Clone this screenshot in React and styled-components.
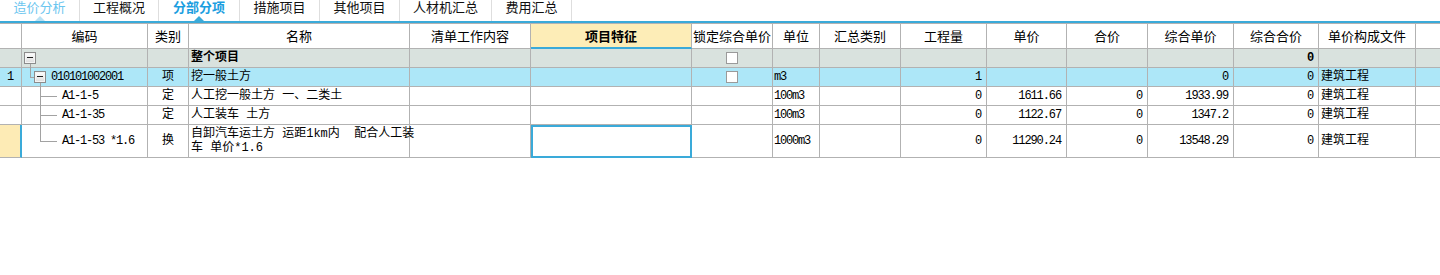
import styled, { createGlobalStyle, css } from 'styled-components';

const GlobalStyle = createGlobalStyle`
  html, body {
    margin: 0;
    padding: 0;
    background: #ffffff;
  }
  body {
    font-family: "Noto Sans CJK SC", sans-serif;
    color: #000;
  }
`;

const BLUE = '#3aaad9';
const GRID = '#b2b2b2';
const COLS = '22px 126px 41px 221px 121px 161px 81px 47px 81px 86px 80px 81px 86px 85px 97px 1fr';

const tabs = [
  { label: '造价分析', width: 80, state: 'visited' },
  { label: '工程概况', width: 79 },
  { label: '分部分项', width: 81, state: 'active' },
  { label: '措施项目', width: 80 },
  { label: '其他项目', width: 80 },
  { label: '人材机汇总', width: 92 },
  { label: '费用汇总', width: 80 }
];

const headers = [
  '', '编码', '类别', '名称', '清单工作内容', '项目特征', '锁定综合单价', '单位',
  '汇总类别', '工程量', '单价', '合价', '综合单价', '综合合价', '单价构成文件', ''
];

const rows = [
  { kind: 'root', name: '整个项目', check: true, csum: '0', tone: 'gray' },
  {
    kind: 'item', num: '1', code: '010101002001', cat: '项', name: '挖一般土方', check: true,
    unit: 'm3', qty: '1', cprice: '0', csum: '0', file: '建筑工程', tone: 'blue'
  },
  {
    kind: 'sub', code: 'A1-1-5', cat: '定', name: '人工挖一般土方 一、二类土',
    unit: '100m3', qty: '0', price: '1611.66', sum: '0', cprice: '1933.99', csum: '0', file: '建筑工程'
  },
  {
    kind: 'sub', code: 'A1-1-35', cat: '定', name: '人工装车 土方',
    unit: '100m3', qty: '0', price: '1122.67', sum: '0', cprice: '1347.2', csum: '0', file: '建筑工程'
  },
  {
    kind: 'sub', last: true, tall: true, current: true, code: 'A1-1-53 *1.6', cat: '换',
    name: '自卸汽车运土方 运距1km内  配合人工装\n车 单价*1.6',
    unit: '1000m3', qty: '0', price: '11290.24', sum: '0', cprice: '13548.29', csum: '0', file: '建筑工程'
  }
];

const App = () => {
  return (
    <>
      <GlobalStyle />
      <Page>
        <TabBar>
          {tabs.map((t) => (
            <Tab key={t.label} $width={t.width} $state={t.state}>
              {t.label}
              {t.state && <TabArrow $state={t.state} />}
            </Tab>
          ))}
        </TabBar>

        <Grid>
          <HeaderRow>
            {headers.map((h, i) => (
              <HeaderCell key={i} $feature={h === '项目特征'} $last={i === headers.length - 1}>
                {h}
              </HeaderCell>
            ))}
          </HeaderRow>

          {rows.map((r, i) => (
            <Row key={i} $tone={r.tone} $tall={r.tall}>
              <NumCell $current={r.current}>{r.num}</NumCell>
              <CodeCell>
                {r.kind === 'root' && (
                  <>
                    <ExpandBox $left={2} />
                    <VLine $left={8} $top="calc(50% + 6px)" $bottom="-1px" />
                  </>
                )}
                {r.kind === 'item' && (
                  <>
                    <VLine $left={8} $top="0" $bottom="50%" />
                    <HLine $left={8} $width={4} />
                    <ExpandBox $left={12} />
                    <VLine $left={18} $top="calc(50% + 6px)" $bottom="-1px" />
                  </>
                )}
                {r.kind === 'sub' && (
                  <>
                    <VLine $left={18} $top="-1px" $bottom={r.last ? '50%' : '-1px'} />
                    <HLine $left={18} $width={17} />
                  </>
                )}
                <CodeText $indent={r.kind === 'item' ? 29 : r.kind === 'sub' ? 40 : 0}>{r.code}</CodeText>
              </CodeCell>
              <CenterCell>{r.cat}</CenterCell>
              <TextCell $bold={r.kind === 'root'}>{r.name}</TextCell>
              <Cell />
              <Cell $current={r.current} />
              <CenterCell>{r.check && <CheckBox />}</CenterCell>
              <MonoCell>{r.unit}</MonoCell>
              <Cell />
              <NumberCell>{r.qty}</NumberCell>
              <NumberCell>{r.price}</NumberCell>
              <NumberCell>{r.sum}</NumberCell>
              <NumberCell>{r.cprice}</NumberCell>
              <NumberCell $bold={r.kind === 'root'}>{r.csum}</NumberCell>
              <TextCell>{r.file}</TextCell>
              <FillCell />
            </Row>
          ))}
        </Grid>
      </Page>
    </>
  );
};

const Page = styled.div`
  width: 1440px;
  height: 275px;
  background: #fff;
  overflow: hidden;
`;

const TabBar = styled.div`
  display: flex;
  height: 21px;
  border-bottom: 2px solid ${BLUE};
`;

const Tab = styled.div`
  position: relative;
  box-sizing: border-box;
  width: ${(p) => p.$width}px;
  border-right: 1px solid #dedede;
  display: flex;
  justify-content: center;
  align-items: flex-start;
  font-size: 13px;
  line-height: 14px;
  color: #111;

  ${(p) =>
    p.$state === 'visited' &&
    css`
      color: #6cc6ef;
    `}

  ${(p) =>
    p.$state === 'active' &&
    css`
      color: #1b9ee0;
      font-weight: 700;
    `}
`;

const TabArrow = styled.span`
  position: absolute;
  bottom: 0;
  left: 50%;
  margin-left: -5px;
  width: 0;
  height: 0;
  border-left: 5px solid transparent;
  border-right: 5px solid transparent;
  border-bottom: 5px solid ${(p) => (p.$state === 'active' ? BLUE : '#b9e1f3')};
`;

const Grid = styled.div`
  display: flex;
  flex-direction: column;
`;

const HeaderRow = styled.div`
  display: grid;
  grid-template-columns: ${COLS};
  border-top: 1px solid ${GRID};
  height: 25px;
`;

const HeaderCell = styled.div`
  box-sizing: border-box;
  display: flex;
  align-items: center;
  justify-content: center;
  font-size: 13px;
  line-height: 14px;
  white-space: nowrap;
  border-right: ${(p) => (p.$last ? 'none' : `1px solid ${GRID}`)};
  border-bottom: 1px solid ${GRID};
  background: #fff;

  ${(p) =>
    p.$feature &&
    css`
      background: #fdedb7;
      font-weight: 700;
      border-bottom: 2px solid ${BLUE};
    `}
`;

const rowTones = {
  gray: '#d9e2de',
  blue: '#ade7f8'
};

const Row = styled.div`
  display: grid;
  grid-template-columns: ${COLS};
  height: ${(p) => (p.$tall ? 33 : 19)}px;
  background: ${(p) => rowTones[p.$tone] || '#fff'};
`;

const Cell = styled.div`
  position: relative;
  box-sizing: border-box;
  display: flex;
  align-items: center;
  min-width: 0;
  border-right: 1px solid ${GRID};
  border-bottom: 1px solid ${GRID};
  font-family: "Liberation Mono", "Noto Sans CJK SC", monospace;
  font-size: 12px;
  line-height: 14px;
  white-space: nowrap;

  ${(p) =>
    p.$current &&
    css`
      outline: 2px solid ${BLUE};
      outline-offset: -2px;
      background: #fff;
      z-index: 1;
    `}
`;

const NumCell = styled(Cell)`
  justify-content: center;

  ${(p) =>
    p.$current &&
    css`
      outline: none;
      background: #fdebb5;
      border-right: 2px solid ${BLUE};
    `}
`;

const CodeCell = styled(Cell)`
  letter-spacing: -1.2px;
`;

const CodeText = styled.span`
  padding-left: ${(p) => p.$indent}px;
`;

const CenterCell = styled(Cell)`
  justify-content: center;
`;

const TextCell = styled(Cell)`
  padding-left: 2px;
  white-space: pre;
  font-weight: ${(p) => (p.$bold ? 700 : 400)};
`;

const MonoCell = styled(Cell)`
  padding-left: 1px;
  letter-spacing: -1.2px;
`;

const NumberCell = styled(Cell)`
  justify-content: flex-end;
  padding-right: 5px;
  letter-spacing: -1.1px;
  font-weight: ${(p) => (p.$bold ? 700 : 400)};
`;

const FillCell = styled(Cell)`
  border-right: none;
`;

const ExpandBox = styled.span`
  position: absolute;
  left: ${(p) => p.$left}px;
  top: 50%;
  margin-top: -6px;
  box-sizing: border-box;
  width: 12px;
  height: 12px;
  border: 1px solid #8c8c8c;
  background: linear-gradient(#ffffff, #dcdcdc);
  box-shadow: inset 0 0 0 1px #f4f4f4;

  &::after {
    content: '';
    position: absolute;
    left: 2px;
    right: 2px;
    top: 4px;
    height: 1px;
    background: #222;
  }
`;

const VLine = styled.span`
  position: absolute;
  left: ${(p) => p.$left}px;
  top: ${(p) => p.$top};
  bottom: ${(p) => p.$bottom};
  width: 1px;
  background: #a2a2a2;
`;

const HLine = styled.span`
  position: absolute;
  left: ${(p) => p.$left}px;
  top: 50%;
  width: ${(p) => p.$width}px;
  height: 1px;
  background: #a2a2a2;
`;

const CheckBox = styled.span`
  box-sizing: border-box;
  width: 12px;
  height: 12px;
  border: 1px solid #9a9a9a;
  background: #fff;
`;

export default App;
